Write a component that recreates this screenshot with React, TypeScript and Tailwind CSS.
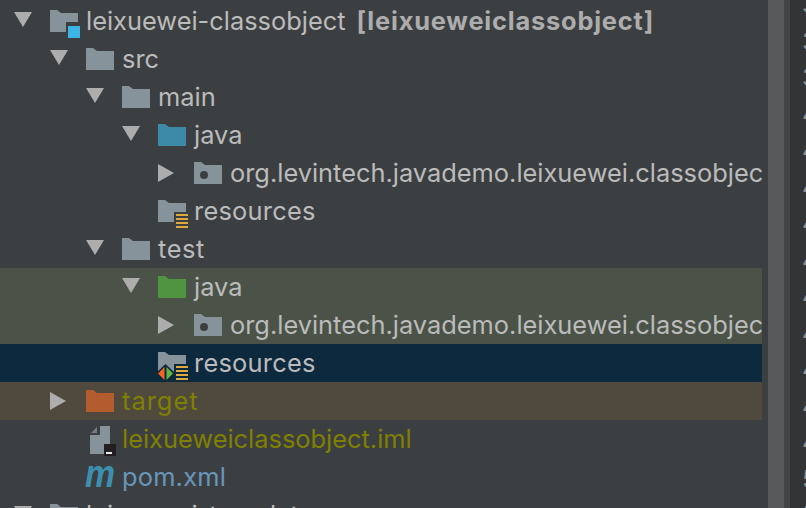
const font = "font-['Inter','Liberation_Sans',sans-serif]"

type IconKind = 'module' | 'plain' | 'source' | 'package' | 'res' | 'test' | 'testres' | 'target' | 'iml' | 'maven'

type Row = {
  depth: number
  arrow?: 'open' | 'closed'
  icon: IconKind
  label: string
  extra?: string
  tone?: string
  bg?: string
  track?: string
}

const rows: Row[] = [
  { depth: 0, arrow: 'open', icon: 'module', label: 'leixuewei-classobject', extra: '[leixueweiclassobject]' },
  { depth: 1, arrow: 'open', icon: 'plain', label: 'src' },
  { depth: 2, arrow: 'open', icon: 'plain', label: 'main' },
  { depth: 3, arrow: 'open', icon: 'source', label: 'java' },
  { depth: 4, arrow: 'closed', icon: 'package', label: 'org.levintech.javademo.leixuewei.classobject' },
  { depth: 3, icon: 'res', label: 'resources', track: 'tracking-[0.25px]' },
  { depth: 2, arrow: 'open', icon: 'plain', label: 'test', track: 'tracking-[0.6px]' },
  { depth: 3, arrow: 'open', icon: 'test', label: 'java', bg: 'bg-[#4b5348]' },
  { depth: 4, arrow: 'closed', icon: 'package', label: 'org.levintech.javademo.leixuewei.classobject', bg: 'bg-[#4b5348]' },
  { depth: 3, icon: 'testres', label: 'resources', bg: 'bg-[#0d293e]', track: 'tracking-[0.25px]' },
  { depth: 1, arrow: 'closed', icon: 'target', label: 'target', tone: 'text-[#808000]', bg: 'bg-[#504a3e]', track: 'tracking-[1px]' },
  { depth: 1, icon: 'iml', label: 'leixueweiclassobject.iml', tone: 'text-[#808000]' },
  { depth: 1, icon: 'maven', label: 'pom.xml', tone: 'text-[#6897bb]', track: 'tracking-[0.2px]' },
  { depth: 0, arrow: 'open', icon: 'plain', label: 'leixuewei-template' },
]

const lineNumbers = [37, 38, 39, 40, 41, 42, 43, 44, 45, 46, 47, 48, 49, 50, 51]

function Icon({ kind }: { kind: IconKind }) {
  if (kind === 'maven') {
    return (
      <svg width="30" height="32" viewBox="0 0 30 32" className="block overflow-visible">
        <text x="-1" y="26" fontFamily="'Liberation Sans', sans-serif" fontSize="38" fontWeight="700" fontStyle="italic" fill="#3d8fb0" textLength="30" lengthAdjust="spacingAndGlyphs">m</text>
      </svg>
    )
  }
  if (kind === 'iml') {
    return (
      <svg width="30" height="32" viewBox="0 0 30 32" className="block overflow-visible">
        <path d="M14 3H24V21H18V31H4V12H14Z" fill="#87939a" />
        <path d="M5 10L11 4V10Z" fill="#87939a" opacity="0.75" />
        <rect x="18" y="21" width="12" height="12" fill="#231f20" />
        <rect x="20" y="29" width="6" height="2" fill="#e8e8e8" />
      </svg>
    )
  }
  const fill =
    kind === 'source' ? '#3d89a8' : kind === 'test' ? '#4f9441' : kind === 'target' ? '#b35c2e' : '#87939a'
  return (
    <svg width="34" height="32" viewBox="0 0 34 32" className="block overflow-visible">
      <path d="M0 5H7L11 8H28V27H0Z" fill={fill} />
      {kind === 'package' && <circle cx="10" cy="18" r="4" fill="#3c3f41" />}
      {kind === 'module' && (
        <>
          <rect x="16" y="17" width="16" height="16" fill="#3c3f41" />
          <rect x="18" y="21" width="12" height="12" fill="#3cb4e6" />
        </>
      )}
      {(kind === 'res' || kind === 'testres') && (
        <>
          <path d="M16 17H28V34H16Z" fill={kind === 'res' ? '#3c3f41' : '#0d293e'} />
          <path d="M18 19H30V21H18ZM18 23H30V25H18ZM18 27H30V29H18ZM18 31H30V33H18Z" fill="#e0a93d" />
        </>
      )}
      {kind === 'testres' && (
        <>
          <path d="M-2 26L7.5 17L17 26L7.5 35Z" fill="#0d293e" />
          <path d="M6.5 20V33L0 26.5Z" fill="#f26522" />
          <path d="M8.5 20V33L15 26.5Z" fill="#62b543" />
        </>
      )}
    </svg>
  )
}

function TreeRow({ row }: { row: Row }) {
  return (
    <div className={`flex h-[38px] w-[762px] shrink-0 items-center overflow-hidden whitespace-nowrap ${row.bg ?? ''}`}>
      <div className="flex shrink-0 items-center" style={{ paddingLeft: row.depth * 36 + 14 }}>
        <div className="flex w-[36px] shrink-0 items-center">
          {row.arrow === 'open' && <div className="-mt-[3px] h-0 w-0 border-x-[9px] border-t-[15px] border-x-transparent border-t-[#adadad]" />}
          {row.arrow === 'closed' && <div className="h-0 w-0 border-y-[9px] border-l-[16px] border-y-transparent border-l-[#adadad]" />}
        </div>
        <div className="flex h-[32px] w-[36px] shrink-0 items-center">
          <Icon kind={row.icon} />
        </div>
      </div>
      <span className={`text-[25.4px] leading-[38px] ${row.tone ?? 'text-[#bbbbbb]'} ${row.track ?? ''}`}>{row.label}</span>
      {row.extra && <span className="ml-[11px] text-[25.4px] leading-[38px] font-bold tracking-[0.8px] text-[#adadad]">{row.extra}</span>}
    </div>
  )
}

export default function App() {
  return (
    <div className={`flex h-[508px] w-[806px] overflow-hidden bg-[#3c3f41] ${font}`}>
      <div className="flex w-[762px] shrink-0 flex-col overflow-hidden pt-[2px]">
        {rows.map((row, i) => (
          <TreeRow key={i} row={row} />
        ))}
      </div>
      <div className="ml-[6px] h-full w-[16px] shrink-0 bg-[#58595b]" />
      <div className="w-[6px] shrink-0 bg-[#424547]" />
      <div className="h-full flex-1 overflow-hidden bg-[#323436] pl-[12px]">
        <div className="-mt-[13px] flex flex-col">
          {lineNumbers.map((n) => (
            <span key={n} className="h-[36.5px] shrink-0 text-[24px] leading-[36.5px] text-[#8a8c8e]">{n}</span>
          ))}
        </div>
      </div>
    </div>
  )
}
